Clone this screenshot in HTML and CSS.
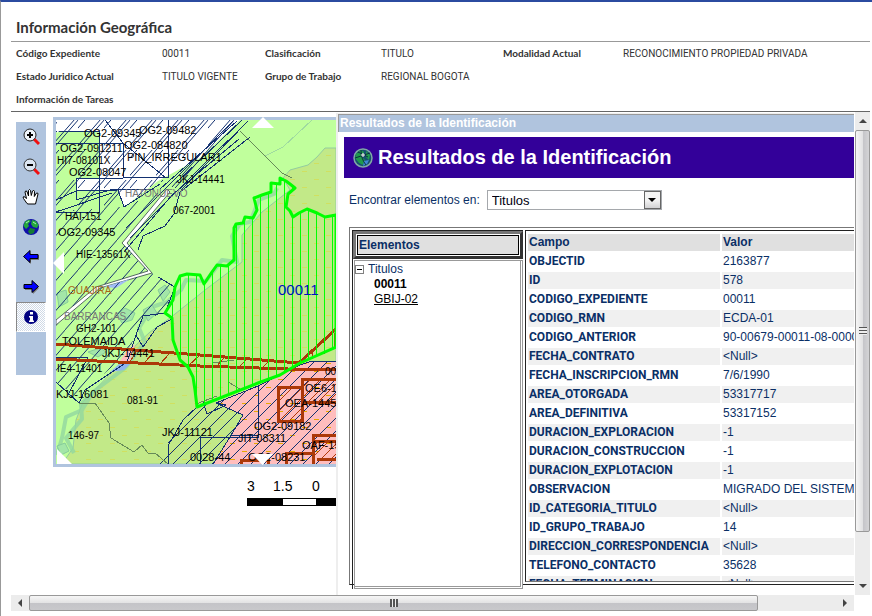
FILE: index.html
```html
<!DOCTYPE html>
<html lang="es">
<head>
<meta charset="utf-8">
<title>Información Geográfica</title>
<link rel="stylesheet" href="styles.css">
</head>
<body>
<div class="page">
  <header class="summary">
    <h1>Información Geográfica</h1>
    <dl class="facts">
      <dt>Código Expediente</dt><dd>00011</dd>
      <dt>Clasificación</dt><dd>TITULO</dd>
      <dt>Modalidad Actual</dt><dd>RECONOCIMIENTO PROPIEDAD PRIVADA</dd>
      <dt>Estado Juridico Actual</dt><dd>TITULO VIGENTE</dd>
      <dt>Grupo de Trabajo</dt><dd class="wide">REGIONAL BOGOTA</dd>
      <dt>Información de Tareas</dt>
    </dl>
  </header>

  <main class="workspace">
    <div class="content">
      <nav class="tools" aria-label="Herramientas">
        <button type="button" aria-label="Acercar"><svg viewBox="0 0 18 18"><path d="M12 11l5 5" stroke="#f01010" stroke-width="3"/><circle cx="8" cy="7" r="6" fill="#eef4fb" stroke="#222"/><path d="M5 7h6M8 4v6" stroke="#000" stroke-width="2"/></svg></button>
        <button type="button" aria-label="Alejar"><svg viewBox="0 0 18 18"><path d="M12 11l5 5" stroke="#f01010" stroke-width="3"/><circle cx="8" cy="7" r="6" fill="#dce6f2" stroke="#333"/><path d="M5 7h6" stroke="#000" stroke-width="2"/></svg></button>
        <button type="button" aria-label="Desplazar"><svg viewBox="0 0 18 18"><path d="M5 15.500L1.500 10.500Q.5 8.500 2 8.500L4.500 10.500L3 4Q3.500 2 5 3.500L6.500 8L6.500 2.500Q7.500 .5 8.500 2.500L9.300 7.500L10.500 3Q12 1.500 12.500 3.500L12.300 8.500L14.500 5Q16 4.500 16 6L14.500 12L13.500 16H6Z" fill="#fff" stroke="#000"/></svg></button>
        <button type="button" aria-label="Vista completa"><svg viewBox="0 0 18 18"><circle cx="9" cy="9" r="8" fill="#1010a8"/><path d="M3 3.500L7 1.500L9 3L6 6L7 8L4 11L1.500 8ZM10 2L14 3L16.500 7L15 10L11 9L9 6Z" fill="#24a63a"/><path d="M8 10l5 1-1 4-4 1.500-2-3z" fill="#157a33"/><path d="M4 5l3-2M11 4l3 2" stroke="#a8f0b8"/></svg></button>
        <button type="button" aria-label="Anterior"><svg viewBox="0 0 18 18"><path d="M9 5L3 10l6 6v-4h8V7H9z" fill="#777"/><path d="M8 2.500L1.500 8.500L8 14.500v-4h8V6.500H8z" fill="#00f" stroke="#000"/></svg></button>
        <button type="button" aria-label="Siguiente"><svg viewBox="0 0 18 18"><path d="M10 5l7 5-6 6v-4H3V8h7z" fill="#777"/><path d="M10 2.500l6.500 6L10 14.500v-4H2V6.500h8z" fill="#00f" stroke="#000"/></svg></button>
        <button type="button" class="active" aria-label="Identificar"><svg viewBox="0 0 18 18"><circle cx="9" cy="9" r="7" fill="#000080"/><path d="M8 4h3v2.500H8zM7 8h4v4.500h1V14H7v-1.500h1V9.500H7z" fill="#fff"/></svg></button>
      </nav>

      <section class="map-area">
        <svg class="map" viewBox="53 117 283 350" preserveAspectRatio="xMinYMin slice" role="img" aria-label="Mapa de títulos">
          <defs>
            <pattern id="dash" width="24" height="16" patternUnits="userSpaceOnUse"><path d="M2 3.500h5M14 11.500h5" stroke="#d0e060"/></pattern>
            <pattern id="dashPink" width="24" height="16" patternUnits="userSpaceOnUse"><path d="M2 3.500h5M14 11.500h5" stroke="#e8a800"/></pattern>
            <pattern id="bars" width="8" height="8" patternUnits="userSpaceOnUse"><path d="M4.500 0v8" stroke="#00ff00"/></pattern>
            <pattern id="hatch" width="13" height="13" patternUnits="userSpaceOnUse"><path d="M-1 14L14 -1M-1 1L1 -1M12 14L14 12" stroke="#123070"/></pattern>
            <pattern id="hatchDense" width="26" height="30" patternUnits="userSpaceOnUse"><path d="M-13 15L13 -15M-1 31L27 -1M13 45L39 15M-13 23L13 -7M-5 31L30 -9M13 53L39 23" stroke="#123070"/></pattern>
            <pattern id="hatchThin" width="13" height="15" patternUnits="userSpaceOnUse"><path d="M-1 16L14 -1M-1 1L1 -1M12 16L14 14" stroke="#123070"/></pattern>
            <pattern id="rustHatch" width="10" height="10" patternUnits="userSpaceOnUse"><path d="M-1 11L11 -1" stroke="#b03808"/></pattern>
            <clipPath id="extent"><path d="M56 120h280v344H56z"/></clipPath>
            <path id="title" d="M280 178L286 181L290 184L295 188L288 194L286 207L290 211L293 217L299 213L307 209L317 213L325 217L336 215V347L300 363L280 375L258 383L197 407L195 390L193 377L188 367L180 360L173 340L172 318L165 313L173 300L175 287L180 276L187 274L200 275L204 284L212 272L217 265L227 266L234 260V228L236 224L243 223L245 217L253 218L257 210L254 198L262 195L271 192L271 183L280 184Z"/>
            <path id="olive" d="M336 148H325L317 157L308 165L290 170L283 178L290 190L262 212L242 235V262L205 290L170 318L150 332L137 344L115 369L83 402L76 420L73 448L62 464H336Z"/>
            <path id="pink" d="M213 464L230 437L243 415L216 403L258 386L300 365L312 361H336V464Z"/>
          </defs>
          <rect x="53" y="117" width="283" height="350" fill="#b0c4de"/>
          <g clip-path="url(#extent)">
            <rect x="56" y="120" width="280" height="344" fill="#c0ff9c"/>
            <use href="#olive" fill="#c2e988"/>
            <use href="#olive" fill="url(#dash)" stroke="#92cca0"/>
            <path d="M56 120H240L200 158L158 181L124 207L118 190H56Z" fill="#fff"/>
            <path d="M56 131H100V178H76V212H56ZM76 200L100 190H118L124 207L100 222H76Z" fill="#c0ff9c"/>

            <g fill="none" stroke="#92d8a0" stroke-width="4" opacity=".8" stroke-linejoin="round">
              <path d="M277 188L274 194L259 200L250 222L240 224L232 236L237 262L222 260L206 281L186 280L181 290L167 302L152 307L139 328L145 342L125 368L93 392L82 410L66 417L62 438L57 455"/>
              <path d="M94 392l-13 12 1 15-16 19 8 15"/>
            </g>
            <g fill="#a3e6a8" stroke="#86cc9a">
              <path d="M57 293l9-3 2 12-9 5zM117 314l8-6 10 5-3 7-10 3zM158 290l7-5 5 7-7 9zM143 310l9-5 5 8-9 8zM88 352l12-4 6 4-8 5zM57 446l8-3 4 8-8 4z"/>
            </g>
            <path d="M56 320V325L100 288L152 273L127 243L170 192L167 189L122 243L148 271L96 287Z" fill="#fff" stroke="#556a60"/>
            <path d="M104 287L130 279L116 288Z" fill="#a0bcf4"/>
            <path d="M110 372L123 361L132 362L124 370Z" fill="#8fb4f0"/>
            <path d="M135 344L127 350L120 361L130 362Z" fill="#ffbdbd"/>

            <use href="#pink" fill="#ffbdbd"/>
            <use href="#pink" fill="url(#dashPink)"/>
            <g class="survey">
              <use href="#pink" fill="url(#hatch)" stroke="#123070"/>
              <path d="M160 464L168 450L169 435L180 418L197 407L216 403L243 415L213 464Z" fill="url(#hatch)"/>
              <path d="M56 120H240L180 190L158 181L124 207L56 212Z" fill="url(#hatchDense)"/>
              <path d="M56 212L124 207L167 189L122 243L148 271L96 287L56 320Z" fill="url(#hatchThin)"/>
              <path d="M56 325L100 288L152 273L173 285L165 313L140 320L130 350L79 398L56 382Z" fill="url(#hatchThin)"/>
              <g fill="none" stroke="#123070">
                <path d="M56 131H99V212H56M56 143H123V177H168V120M76 200V178H123M76 200L110 190L155 189M118 190L124 207L160 184M56 200L76 191L118 190M56 212L112 193M105 120L123 143L166 178"/>
                <path d="M181 190L248 121M160 189L237 121M176 183L242 120M126 228L233 121M130 238L228 140M124 252L172 195L239 139M138 250L143 236L165 226L174 214L180 192L250 137"/>
                <path d="M56 357H88L68 395M56 382L79 403L85 390L127 362L136 335L143 316L165 313L175 287L158 277M136 335L143 347L157 327L172 319"/>
                <path d="M200 464V437H230M258 386V437H230M243 415L230 437M216 403L226 405L207 414L203 402M168 464L169 444L183 420L197 407M230 435H258"/>
              </g>
              <g fill="none" stroke="#668a58">
                <path d="M79 403H95L109 423L111 438L134 452L142 445L148 453L155 453L168 464M240 131L282 173L292 178M196 404L217 396M229 372L228 382L240 389M212 363L234 360"/>
                <path d="M265 156L283 147L312 120" stroke="#9fdaa0"/>
              </g>
              <g fill="none" stroke="#ac3808">
                <path d="M56 344L200 355L299 363L336 329M56 359L200 366L288 369H336" stroke-width="3"/>
                <path d="M137 350l-7 12M154 352l-9 10M169 354l-9 10M199 356l-10 9M224 358l-8 9M246 360l-8 8M269 361l-8 8M324 340v14M334 333v14M312 352v7"/>
                <path d="M278 387H302V421H278ZM336 379H302V402H336M313 464V435H336M315 441H336M317 459H336M286 464V453H313M241 464V460H268V464" stroke-width="3"/>
                <path d="M279 388H301V420H279ZM303 380H336V401H303ZM315 442H336V458H315Z" stroke="none" fill="url(#rustHatch)"/>
              </g>
            </g>
            <use href="#title" fill="url(#bars)" stroke="#00ff00" stroke-width="3" stroke-linejoin="round"/>

            <g class="labels">
              <text x="84" y="137">OG2-09345</text><text x="139" y="134">OG2-09482</text>
              <text x="60" y="152">OG2-091211</text><text x="124" y="149">OG2-084820</text>
              <text class="small" x="57" y="164">HI7-08101X</text><text x="127" y="161">PIN_IRREGULAR1</text>
              <text x="69" y="176">OG2-08047</text><text class="small" x="177" y="183">JKJ-14441</text>
              <text class="place" x="125" y="197">HATONUEVO</text><text class="small" x="173" y="214">067-2001</text>
              <text class="small" x="65" y="220">HAI-151</text><text x="58" y="236">OG2-09345</text>
              <text class="small" x="76" y="258">HIE-13561X</text><text class="region" x="68" y="294">GUAJIRA</text>
              <text class="place" x="64" y="320">BARRANCAS</text><text class="small" x="76" y="332">GH2-101</text>
              <text x="62" y="345">TOLEMAIDA</text><text x="102" y="357">JKJ-14441</text>
              <text class="small" x="57" y="372">IE4-11401</text><text x="56" y="398">KJJ-16081</text>
              <text class="small" x="127" y="404">081-91</text><text class="small" x="68" y="439">146-97</text>
              <text x="162" y="436">JKJ-11121</text><text x="190" y="461">0028-44</text>
              <text x="248" y="461">OG2-08231</text><text x="238" y="442">JIT-08311</text>
              <text x="254" y="430">OG2-09182</text><text x="285" y="407">OEA-1445</text>
              <text x="305" y="392">OE6-1</text><text x="302" y="449">OAF-15</text><text class="small" x="325" y="375">00</text>
              <text class="code" x="278" y="295">00011</text>
            </g>
          </g>
          <path d="M252 128l11-11 11 11zM53 263l11-11v22zM252 454h21l-10.500 11zM57 449v15h15zM57 120h15l-15 13z" fill="#fff"/>
        </svg>
        <svg class="scale" viewBox="0 0 94 30" preserveAspectRatio="xMinYMin slice" role="img" aria-label="Escala">
          <text x="5" y="13">3</text><text x="31" y="13">1.5</text><text x="70" y="13">0</text>
          <path d="M5 20h93v8H5z"/><path d="M41 21h33v6H41z" fill="#fff"/>
        </svg>
      </section>

      <section class="panel">
        <h2 class="titlebar">Resultados de la Identificación</h2>
        <div class="banner">
          <svg viewBox="0 0 20 20"><circle cx="10" cy="10" r="9" fill="#174f70" stroke="#7fa9a5" stroke-width="1.500"/><path d="M3 6l5-4 3 2-2 5 3 3-2 5-4-2-4-5zM13 3l4 4-1 5-3-3z" fill="#1f9a4c"/><path d="M11 13l5-1-2 4-4 2z" fill="#3f86d8"/><path d="M2 10l15-5M8 2q0 9 5 15M5 4l10 5" stroke="#0a3040" fill="none"/><path d="M10 5v4M8 7h4" stroke="#fff"/></svg>
          <h3>Resultados de la Identificación</h3>
        </div>
        <div class="finder">
          <label for="layer">Encontrar elementos en:</label>
          <span class="picker"><select id="layer"><option>Titulos</option></select><span class="drop" aria-hidden="true"></span></span>
        </div>
        <div class="frame">
          <div class="tree">
            <div class="tree-head"><h4>Elementos</h4></div>
            <div class="tree-body">
              <div class="node"><span class="toggle"></span>Titulos</div>
              <ul><li><b>00011</b></li><li><a href="#gbij">GBIJ-02</a></li></ul>
            </div>
          </div>
          <div class="details">
            <table>
              <thead><tr><th>Campo</th><th>Valor</th></tr></thead>
              <tbody>
                <tr><th>OBJECTID</th><td>2163877</td></tr>
                <tr><th>ID</th><td>578</td></tr>
                <tr><th>CODIGO_EXPEDIENTE</th><td>00011</td></tr>
                <tr><th>CODIGO_RMN</th><td>ECDA-01</td></tr>
                <tr><th>CODIGO_ANTERIOR</th><td>90-00679-00011-08-00000</td></tr>
                <tr><th>FECHA_CONTRATO</th><td>&lt;Null&gt;</td></tr>
                <tr><th>FECHA_INSCRIPCION_RMN</th><td>7/6/1990</td></tr>
                <tr><th>AREA_OTORGADA</th><td>53317717</td></tr>
                <tr><th>AREA_DEFINITIVA</th><td>53317152</td></tr>
                <tr><th>DURACION_EXPLORACION</th><td>-1</td></tr>
                <tr><th>DURACION_CONSTRUCCION</th><td>-1</td></tr>
                <tr><th>DURACION_EXPLOTACION</th><td>-1</td></tr>
                <tr><th>OBSERVACION</th><td>MIGRADO DEL SISTEMA</td></tr>
                <tr><th>ID_CATEGORIA_TITULO</th><td>&lt;Null&gt;</td></tr>
                <tr><th>ID_GRUPO_TRABAJO</th><td>14</td></tr>
                <tr><th>DIRECCION_CORRESPONDENCIA</th><td>&lt;Null&gt;</td></tr>
                <tr><th>TELEFONO_CONTACTO</th><td>35628</td></tr>
                <tr><th>FECHA_TERMINACION</th><td>&lt;Null&gt;</td></tr>
              </tbody>
            </table>
          </div>
        </div>
      </section>
    </div>
    <div class="scroll vertical"><i class="arrow up"></i><i class="thumb"></i><i class="rest"></i><i class="arrow down"></i></div>
    <div class="scroll horizontal"><i class="arrow left"></i><i class="thumb"></i><i class="rest"></i><i class="arrow right"></i></div>
  </main>
</div>
</body>
</html>
```
FILE: styles.css
```css
* { box-sizing: border-box; }
body {
  margin: 0;
  background: #fff;
  color: #333;
  font-family: "Liberation Sans", Arial, sans-serif;
}
h1, h2, h3, h4, dl, dd, ul { margin: 0; padding: 0; }

.page {
  display: flex;
  flex-direction: column;
  height: 100vh;
  overflow: hidden;
  padding: 0 2px 5px 10px;
  border-top: 2px solid #2b4ba0;
  border-left: 1px solid #999;
}

/* Record summary */
.summary {
  border-bottom: 1px solid #666;
  font-family: Lato, sans-serif;
}
.summary h1 {
  height: 40px;
  padding: 15px 5px 0;
  border-bottom: 1px solid #999;
  font-size: 15px;
  line-height: 20px;
}
.facts {
  display: grid;
  grid-template-columns: 146px 103px 116px 122px 120px 1fr;
  padding-left: 5px;
  font-size: 10px;
  line-height: 23px;
  white-space: nowrap;
}
.facts dt { font-weight: bold; }
.facts dd { font-family: Roboto, sans-serif; }
.facts .wide { grid-column: span 3; }

/* Workspace and scroll bars */
.workspace {
  flex: 1;
  min-height: 0;
  display: grid;
  grid-template: minmax(0, 1fr) 16px / minmax(0, 1fr) 16px;
}
.content { display: flex; min-width: 0; overflow: hidden; }
.scroll { display: flex; background: #ececec; }
.vertical { flex-direction: column; border-left: 1px solid #fff; }
.arrow {
  flex: 0 0 18px;
  display: flex;
  align-items: center;
  justify-content: center;
}
.arrow::before { content: ""; border: 4px solid transparent; }
.up::before { border-top: 0; border-bottom-color: #444; }
.down::before { border-bottom: 0; border-top-color: #444; }
.left::before { border-left: 0; border-right-color: #444; }
.right::before { border-right: 0; border-left-color: #444; }
.thumb {
  display: flex;
  align-items: center;
  justify-content: center;
  border: 1px solid #999;
  border-radius: 2px;
}
.thumb::before { content: ""; width: 8px; height: 8px; }
.vertical .thumb { flex: 402; background: linear-gradient(90deg, #f6f6f6, #e2e2e3 50%, #c4c4c8 52%, #d4d4d6); }
.vertical .thumb::before { background: repeating-linear-gradient(#555 0 1px, #eee 1px 3px); }
.vertical .rest { flex: 45; }
.horizontal .thumb { flex: 729; background: linear-gradient(#f6f6f6, #e2e2e3 50%, #c4c4c8 52%, #c8c8cb); }
.horizontal .thumb::before { background: repeating-linear-gradient(90deg, #555 0 2px, #eee 2px 3px); }
.horizontal .rest { flex: 78; }

/* Map tools */
.tools {
  flex: 0 0 30px;
  align-self: flex-start;
  margin: 10px 7px 0 5px;
  padding-bottom: 43px;
  background: #b0c4de;
}
.tools button {
  display: flex;
  align-items: center;
  justify-content: center;
  width: 30px;
  height: 30px;
  padding: 0;
  border: 1px solid transparent;
  background: none;
}
.tools svg { width: 18px; height: 18px; fill: none; }
.tools .active {
  border-color: #888 #fff #fff #888;
  background: repeating-conic-gradient(#fff 0 25%, #cfd9e6 0 50%) 0 0 / 2px 2px;
}

/* Map */
.map-area { flex: 0 0 283px; padding-top: 5px; }
.map { display: block; width: 100%; height: auto; }
.survey { shape-rendering: crispEdges; }
.labels { font-size: 11px; fill: #000; }
.labels .small { font-size: 10px; }
.labels .place { font-size: 10px; fill: #777; }
.labels .region { font-size: 10px; fill: #a86818; }
.labels .code { font-size: 15px; fill: #0010c0; }
.scale { display: block; width: 94px; height: 30px; margin: 11px 0 0 auto; font-size: 14px; }

/* Identify results */
.panel {
  flex: 1;
  min-width: 0;
  display: flex;
  flex-direction: column;
  margin-top: 1px;
  border-left: 2px solid #eee;
  border-top: 1px solid #eee;
  overflow: hidden;
  color: #0a2f66;
  font-size: 12px;
}
.panel > * { flex-shrink: 0; }
.titlebar {
  margin-bottom: 5px;
  padding-left: 1px;
  border-top: 1px solid #999;
  border-left: 1px solid #999;
  background: #b0c4de;
  color: #fff;
  font-size: 12px;
  line-height: 17px;
}
.banner {
  display: flex;
  align-items: center;
  gap: 5px;
  margin-left: 6px;
  padding-left: 9px;
  height: 41px;
  background: #330099;
  color: #fff;
}
.banner svg { width: 20px; height: 20px; }
.banner h3 { font-size: 20px; line-height: 41px; }
.finder {
  display: flex;
  align-items: center;
  gap: 7px;
  margin: 12px 0 0 6px;
  padding-left: 5px;
}
.picker { position: relative; width: 175px; height: 20px; }
.picker select {
  appearance: none;
  width: 100%;
  height: 100%;
  padding: 0 4px;
  border: 1px solid #a5a8ac;
  border-radius: 0;
  background: #fff;
  color: #001;
  font: 13px "Liberation Sans", Arial, sans-serif;
}
.drop {
  position: absolute;
  top: 1px;
  right: 1px;
  display: grid;
  place-items: center;
  width: 17px;
  height: 18px;
  border: 1px solid #666;
  background: linear-gradient(#f4f4f4 50%, #d2d2d4);
  pointer-events: none;
}
.drop::before { content: ""; border: 4px solid transparent; border-bottom: 0; border-top-color: #000; }
.panel .frame {
  flex: 1;
  min-height: 0;
  display: flex;
  gap: 2px;
  margin: 17px 0 10px 11px;
  padding: 2px 0 0 2px;
  border: solid #777;
  border-width: 1px 0 0 1px;
  border-bottom: 1px solid #222;
}
.tree {
  flex: 0 0 171px;
  display: flex;
  flex-direction: column;
  border: solid #222;
  border-width: 1px 0 0 1px;
  margin-bottom: -5px;
}
.tree-head {
  padding: 1px;
  border: 3px solid;
  border-color: #777 #333 #333 #777;
  background: #fff;
}
.tree-head h4 {
  padding-left: 1px;
  border: 1px solid #000;
  background: #e0e0e0;
  font-size: 12px;
  line-height: 18px;
}
.tree-body {
  flex: 1;
  margin: 1px 0 0 1px;
  border: 1px solid #999;
  border-right: 3px double #999;
  border-bottom: 3px double #999;
  background: #fff;
  line-height: 15px;
}
.node { display: flex; align-items: center; gap: 4px; padding-top: 1px; }
.toggle {
  display: grid;
  place-items: center;
  width: 9px;
  height: 9px;
  border: 1px solid #808080;
}
.toggle::before { content: ""; width: 5px; height: 1px; background: #000; }
.tree-body ul { padding-left: 19px; list-style: none; color: #000; }
.tree-body a { color: #000; }
.details {
  flex: 1;
  min-width: 0;
  overflow: hidden;
  margin-bottom: 2px;
  padding-top: 1px;
  border: solid #222;
  border-width: 1px 0 0 1px;
  border-bottom: 1px solid #777;
}
.details table { width: 340px; border-spacing: 2px; table-layout: fixed; }
.details th, .details td {
  height: 17px;
  padding: 0 1px;
  line-height: 17px;
  text-align: left;
  white-space: nowrap;
}
.details th:first-child { width: 192px; }
.details thead th { background: #e0e0e0; }
.details tbody th { font-family: Roboto, sans-serif; }
.details tr:nth-child(even) > * { background: #f0f0f0; }
```
